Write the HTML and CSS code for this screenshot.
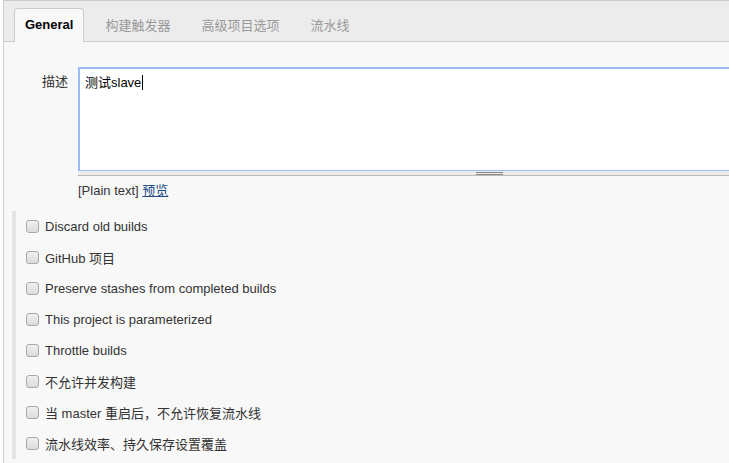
FILE: index.html
```html
<!DOCTYPE html>
<html lang="zh">
<head>
    <meta charset="UTF-8">
    <meta name="viewport" content="width=device-width, initial-scale=1.0">
    <title>General</title>
    <link rel="stylesheet" href="styles.css">
</head>
<body>
    <div class="panel">
        <div class="tabbar">
            <div class="tab active">General</div>
            <div class="tab">构建触发器</div>
            <div class="tab">高级项目选项</div>
            <div class="tab">流水线</div>
        </div>

        <div class="form-row">
            <div class="label">描述</div>
            <div class="editor">
                <div class="textarea">测试slave<span class="caret"></span></div>
                <div class="grip"><span class="handle"></span></div>
                <div class="preview">[Plain text] <a href="#">预览</a></div>
            </div>
        </div>

        <div class="options">
            <label class="option"><span class="box"></span>Discard old builds</label>
            <label class="option"><span class="box"></span>GitHub 项目</label>
            <label class="option"><span class="box"></span>Preserve stashes from completed builds</label>
            <label class="option"><span class="box"></span>This project is parameterized</label>
            <label class="option"><span class="box"></span>Throttle builds</label>
            <label class="option"><span class="box"></span>不允许并发构建</label>
            <label class="option"><span class="box"></span>当 master 重启后，不允许恢复流水线</label>
            <label class="option"><span class="box"></span>流水线效率、持久保存设置覆盖</label>
        </div>
    </div>
</body>
</html>
```

FILE: styles.css
```css
body {
    margin: 0;
    padding: 0;
    font-family: "Liberation Sans", "Noto Sans CJK SC", sans-serif;
    font-size: 13px;
    color: #333;
    background: #fff;
    overflow: hidden;
}
.panel {
    margin-left: 3px;
    min-height: 100vh;
    border-top: 1px solid #ccc;
    border-left: 1px solid #ccc;
    background: #f8f8f8;
    box-sizing: border-box;
    overflow: hidden;
}
.tabbar {
    display: flex;
    align-items: flex-end;
    height: 40px;
    padding-left: 10px;
    background: #ececec;
    border-bottom: 1px solid #ccc;
}
.tab {
    height: 32px;
    line-height: 32px;
    padding: 0 10px;
    margin-right: 9px;
    margin-bottom: -1px;
    border: 1px solid transparent;
    border-bottom: none;
    border-radius: 4px 4px 0 0;
    color: #999;
    white-space: nowrap;
}
.tab.active {
    background: #f8f8f8;
    border-color: #ccc;
    color: #000;
    font-weight: bold;
    height: 33px;
    margin-right: 10px;
}
.form-row {
    display: flex;
    padding-top: 25px;
}
.label {
    width: 64px;
    flex-shrink: 0;
    padding-right: 10px;
    padding-top: 4px;
    text-align: right;
}
.editor {
    width: 823px;
    flex-shrink: 0;
}
.textarea {
    height: 104px;
    padding: 3px 5px;
    box-sizing: border-box;
    background: #fff;
    border: 2px solid #9bbcf2;
    border-bottom-width: 1px;
    color: #000;
}
.caret {
    display: inline-block;
    width: 1px;
    height: 15px;
    margin-left: 1px;
    vertical-align: -3px;
    background: #000;
}
.grip {
    display: flex;
    justify-content: center;
    align-items: center;
    height: 4px;
    background: #ececec;
    border-bottom: 1px solid #bbb;
}
.handle {
    width: 27px;
    height: 3px;
    border-top: 1px solid #888;
    border-bottom: 1px solid #888;
    box-sizing: border-box;
}
.preview {
    margin-top: 7px;
    line-height: 16px;
}
.preview a {
    color: #204a87;
}
.options {
    margin: 12px 0 0 8px;
    border-left: 4px solid #e4e4e4;
}
.option {
    display: flex;
    align-items: center;
    height: 31px;
    padding-left: 10px;
}
.box {
    width: 11px;
    height: 11px;
    margin-right: 6px;
    border: 1px solid #a9a9a9;
    border-radius: 3px;
    background: linear-gradient(#f0f0f0, #dcdcdc);
}
```
